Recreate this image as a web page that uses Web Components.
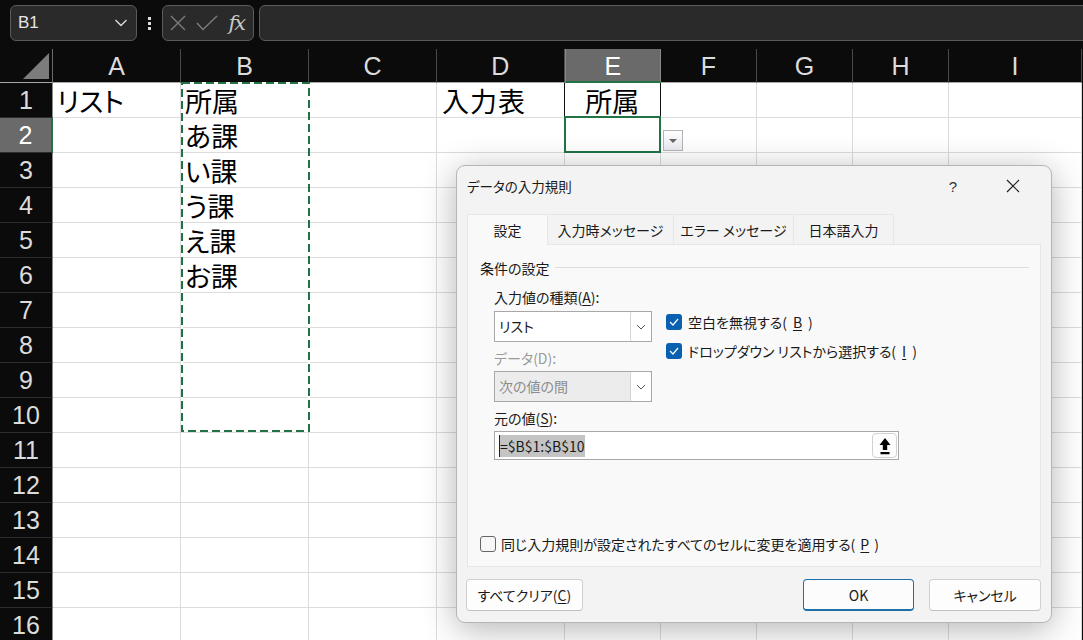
<!DOCTYPE html>
<html lang="ja"><head><meta charset="utf-8"><title>Excel</title>
<style>
html,body{margin:0;padding:0;background:#0b0b0b;height:640px;overflow:hidden}
body{font-family:"Noto Sans CJK JP","Noto Sans",sans-serif}
</style></head><body>
<xl-app>
  <xl-formula-bar></xl-formula-bar>
  <xl-sheet></xl-sheet>
  <xl-dialog></xl-dialog>
</xl-app>
<script>
function def(name, css, html, init){
  customElements.define(name, class extends HTMLElement{
    connectedCallback(){
      if(this.shadowRoot) return;
      const s=this.attachShadow({mode:'open'});
      s.innerHTML='<style>'+css+'</style>'+html;
      if(init) init.call(this,s);
    }
  });
}
def('xl-app',`:host{display:block;position:relative;width:1083px;height:640px;overflow:hidden;background:#0b0b0b}`,`<slot></slot>`);

def('xl-formula-bar',`
:host{display:flex;align-items:center;height:36px;padding:5px 0 8px 10px;box-sizing:content-box;background:#0b0b0b;color:#e6e6e6;font:17px "Liberation Sans",sans-serif}
.box{box-sizing:border-box;height:36px;border:1px solid #5a5a5a;border-radius:6px;background:#2a2a2a;display:flex;align-items:center}
.name{width:127px;padding:0 8px 0 7px;justify-content:space-between}
.dots{width:25px;display:flex;flex-direction:column;align-items:center;gap:2px}
.dots i{width:3px;height:3px;background:#dcdcdc;display:block}
.fx{width:92px;padding:0 6px 0 7px;justify-content:space-between}
.f{flex:1;margin:0 -4px 0 5px;border-radius:6px 0 0 6px}
.fxt{font:italic 21px "DejaVu Serif","Liberation Serif",serif;color:#c9c9c9;letter-spacing:-2px;margin-right:3px}
svg{display:block}
`,`<div class="box name"><span>B1</span><svg width="14" height="10" viewBox="0 0 14 10"><path d="M1.5 2 L7 7.5 L12.5 2" fill="none" stroke="#dcdcdc" stroke-width="1.4"/></svg></div>
<div class="dots"><i></i><i></i><i></i></div>
<div class="box fx"><svg width="16" height="16" viewBox="0 0 16 16"><path d="M1 1 L15 15 M15 1 L1 15" stroke="#7d7d7d" stroke-width="1.4" fill="none"/></svg>
<svg width="22" height="16" viewBox="0 0 22 16"><path d="M1 8 L7 14.5 L21 1" stroke="#7d7d7d" stroke-width="1.4" fill="none"/></svg>
<span class="fxt">fx</span></div>
<div class="box f"></div>`);

const cols=[128,128,128,127.5,96.5,96,96,96,133];
const colNames='ABCDEFGHI'.split('');
const data={
 '0,0':'リスト','1,0':'所属','1,1':'あ課','1,2':'い課','1,3':'う課','1,4':'え課','1,5':'お課','3,0':'入力表'
};
def('xl-sheet',`
:host{display:grid;grid-template-columns:53px ${cols.map(c=>c+'px').join(' ')};grid-template-rows:34px repeat(16,35px);position:relative;color:#000;font:27px/34px "Noto Sans CJK JP",sans-serif;font-feature-settings:"palt"}
.ch,.rh,.corner{background:#0b0b0b;color:#dcdcdc;font:25px/34px "Liberation Sans",sans-serif;box-sizing:border-box;text-align:center}
.corner{border-right:1px solid #6a6a6a;border-bottom:1px solid #a8a8a8;position:relative;display:flex;justify-content:flex-end;align-items:flex-end;padding:0 3px 3px 0}
.ch{border-right:1px solid #4a4a4a;border-bottom:1px solid #a8a8a8}
.ch.on{background:#6a6a6a;color:#fff;border-bottom:2px solid #217346;border-right-color:#8a8a8a;border-left:1px solid #8a8a8a}
.rh{border-right:1px solid #8a8a8a;border-bottom:1px solid #2c2c2c;line-height:35px}
.rh.on{background:#6a6a6a;color:#fff;border-right:2px solid #217346}
.c{background:#fff;border-right:1px solid #dcdcdc;border-bottom:1px solid #dcdcdc;box-sizing:border-box;padding-left:4px;white-space:nowrap;line-height:36px;position:relative}
.c.t{text-align:center;padding:0;border:1px solid #111;border-top:0;margin-left:-1px}
.c.s::after{content:"";position:absolute;left:-1px;top:-2px;right:-1px;bottom:-1px;border:2px solid #217346;z-index:2}
.h{position:absolute;width:6px;height:6px;background:#217346;border:1px solid #fff;left:659px;top:149px;box-sizing:content-box;z-index:3;margin:-1px}
.dd{position:absolute;left:663px;top:81px;width:20px;height:21px;box-sizing:border-box;border:1px solid #b4b4b4;background:linear-gradient(#fff,#e9e9f2);z-index:3;display:flex;align-items:center;justify-content:center}
.dd i{display:block;width:0;height:0;border:4px solid transparent;border-top:4px solid #666;border-bottom:0}
svg.ants{position:absolute;left:181px;top:33px;z-index:3;overflow:visible}
`,``,function(s){
  let h='<div class="corner"><svg width="26" height="26" viewBox="0 0 26 26"><path d="M26 0 V26 H0 Z" fill="#7c7c7c"/></svg></div>';
  colNames.forEach(n=>h+=`<div class="ch${n==='E'?' on':''}">${n}</div>`);
  for(let r=0;r<16;r++){
    h+=`<div class="rh${r===1?' on':''}">${r+1}</div>`;
    for(let c=0;c<9;c++){
      let cls='c',t=data[c+','+r]||'';
      if(c===4&&r===0){cls+=' t';t='所属';}
      if(c===4&&r===1)cls+=' s';
      if(c===3&&r===0)t='<span style="margin-left:1px;letter-spacing:1px">'+t+'</span>';
      h+=`<div class="${cls}">${t}</div>`;
    }
  }
  h+='<svg class="ants" width="128" height="350"><rect x="1" y="1" width="127" height="348" fill="#fff" fill-opacity="0" stroke="#fff" stroke-width="2"/><rect x="1" y="1" width="127" height="348" fill="none" stroke="#217346" stroke-width="2" stroke-dasharray="8 4"/></svg>';
  h+='<div class="dd"><i></i></div><div class="h"></div>';
  s.innerHTML+=h;
});

def('xl-btn',`
:host{display:flex;align-items:center;justify-content:center;box-sizing:border-box;height:32px;background:#fdfdfd;border:1px solid #d0d0d0;border-bottom-color:#c0c0c0;border-radius:4px;font-size:14px;color:#1a1a1a}
:host([primary]){border:1px solid #1d6fa5;border-bottom-width:2px;background:#fcfcfc}
`,`<slot></slot>`);

def('xl-check',`
:host{display:flex;align-items:center;gap:6px;font-size:14px;color:#1a1a1a;height:20px;white-space:nowrap}
.b{width:16px;height:16px;box-sizing:border-box;border-radius:3px;background:#0a60b0;display:flex;align-items:center;justify-content:center;flex:none}
:host([off]) .b{background:#f6f6f6;border:1px solid #666}
:host([off]) svg{display:none}
`,`<span class="b"><svg width="10" height="8" viewBox="0 0 10 8"><path d="M1 4 L4 7 L9 1" stroke="#fff" stroke-width="1.2" fill="none"/></svg></span><slot></slot>`);

def('xl-combo',`
:host{display:flex;box-sizing:border-box;width:158px;height:31px;border:1px solid #a8a8a8;background:#fff;font-size:14px;color:#1a1a1a;align-items:stretch;line-height:29px}
:host([disabled]){background:#ececec;color:#8c8c8c}
.t{flex:1;padding-left:4px}
.a{width:20px;background:#fff;border-left:1px solid #d4d4d4;border-right:0;display:flex;align-items:center;justify-content:center;border-radius:2px}
`,`<span class="t"><slot></slot></span><span class="a"><svg width="10" height="6" viewBox="0 0 10 6"><path d="M1 1 L5 5 L9 1" stroke="#555" stroke-width="1" fill="none"/></svg></span>`);

def('xl-tab',`
:host{display:flex;align-items:center;justify-content:center;box-sizing:border-box;height:30px;font-size:14px;color:#1a1a1a;background:#f3f3f3;border:1px solid #e6e6e6;border-bottom:0;border-left:0}
:host([active]){background:#f9f9f9;border-left:1px solid #e6e6e6;height:31px;margin-bottom:-1px;position:relative;z-index:1;border-radius:2px 2px 0 0}
`,`<slot></slot>`);

def('xl-ref-input',`
:host{display:flex;box-sizing:border-box;width:405px;height:29px;border:1px solid #a8a8a8;background:#fff;align-items:center;padding-left:4px;font-size:14px;color:#1a1a1a;position:relative}
.sel{background:#c4c4c4;line-height:22px;padding-right:1px;border-left:1px solid #222;font-family:"Noto Sans CJK JP",sans-serif}
.up{margin-left:auto;width:25px;height:25px;box-sizing:border-box;border:1px solid #d2d2d2;border-radius:4px;background:#fdfdfd;display:flex;align-items:center;justify-content:center;margin-right:1px}
`,`<span class="sel"><slot></slot></span><span class="up"><svg width="14" height="18" viewBox="0 0 14 18"><path d="M7 1 L12.5 8 H9.2 V13 H4.8 V8 H1.5 Z M2.5 15 H11.5 V17.2 H2.5 Z" fill="#000"/></svg></span>`);

def('xl-dialog',`
:host{position:absolute;left:456px;top:165px;width:596px;height:458px;box-sizing:border-box;background:#f3f3f3;border:1px solid #b5b5b5;border-radius:9px;box-shadow:0 6px 34px rgba(0,0,0,.3);display:flex;flex-direction:column;padding:0 10px;font-size:14px;color:#1a1a1a;font-family:"Noto Sans CJK JP",sans-serif;font-feature-settings:"palt";z-index:5}
.title{display:flex;align-items:center;height:38px;margin-bottom:9px;font-size:13.5px;padding-top:1px}
.title span{flex:1}
.q{width:12px;margin-right:47px;text-align:center;font:15px "Liberation Sans",sans-serif;color:#333}
svg{display:block}
.x{margin-right:21px}
.tabs{display:flex;height:30px;position:relative;z-index:1;flex:none}
.panel{height:323px;width:574px;box-sizing:border-box;border:1px solid #e6e6e6;background:#f9f9f9;display:flex;flex-direction:column;padding:13px 11px 0 12px;flex:none}
.lg{display:flex;align-items:center;gap:5px;height:20px;flex:none}
.lg::after{content:"";flex:1;border-top:1px solid #dcdcdc;margin-top:-2px}
.body{padding-left:14px;display:flex;flex-direction:column}
.lab{height:20px;line-height:20px;margin:0;white-space:nowrap}
.dis{color:#9a9a9a}
.row{display:flex;gap:14px}
.col{display:flex;flex-direction:column}
.checks{padding-top:1px;gap:9px;margin-top:0}
.bottom{margin-top:74px}
.btns{display:flex;margin-top:12px;flex:none}
xl-btn u,u{text-underline-offset:2px}
`,`<div class="title"><span>データの入力規則</span><div class="q">?</div>
<svg class="x" width="14" height="14" viewBox="0 0 14 14"><path d="M1 1 L13 13 M13 1 L1 13" stroke="#222" stroke-width="1.2" fill="none"/></svg></div>
<div class="tabs">
<xl-tab active style="width:81px">設定</xl-tab><xl-tab style="width:126px">入力時メッセージ</xl-tab><xl-tab style="width:120px">エラー メッセージ</xl-tab><xl-tab style="width:100px">日本語入力</xl-tab>
</div>
<div class="panel">
 <div class="lg">条件の設定</div>
 <div class="body">
  <div class="lab" style="margin-top:9px">入力値の種類(<u>A</u>):</div>
  <div class="row" style="margin-top:4px">
    <div class="col">
      <xl-combo>リスト</xl-combo>
      <div class="lab dis" style="margin-top:6px;margin-bottom:3px">データ(D):</div>
      <xl-combo disabled>次の値の間</xl-combo>
    </div>
    <div class="col checks">
      <xl-check>空白を無視する(<u>B</u>)</xl-check>
      <xl-check>ドロップダウン リストから選択する(<u>I</u>)</xl-check>
    </div>
  </div>
  <div class="lab" style="margin-top:6px;margin-bottom:3px">元の値(<u>S</u>):</div>
  <xl-ref-input>=$B$1:$B$10</xl-ref-input>
 </div>
 <xl-check off class="bottom" style="gap:5px">同じ入力規則が設定されたすべてのセルに変更を適用する(<u>P</u>)</xl-check>
</div>
<div class="btns">
 <xl-btn style="width:117px;margin-left:-1px">すべてクリア(<u>C</u>)</xl-btn>
 <xl-btn primary style="width:112px;margin-left:220px">OK</xl-btn>
 <xl-btn style="width:112px;margin-left:15px">キャンセル</xl-btn>
</div>`);
</script>
</body></html>
